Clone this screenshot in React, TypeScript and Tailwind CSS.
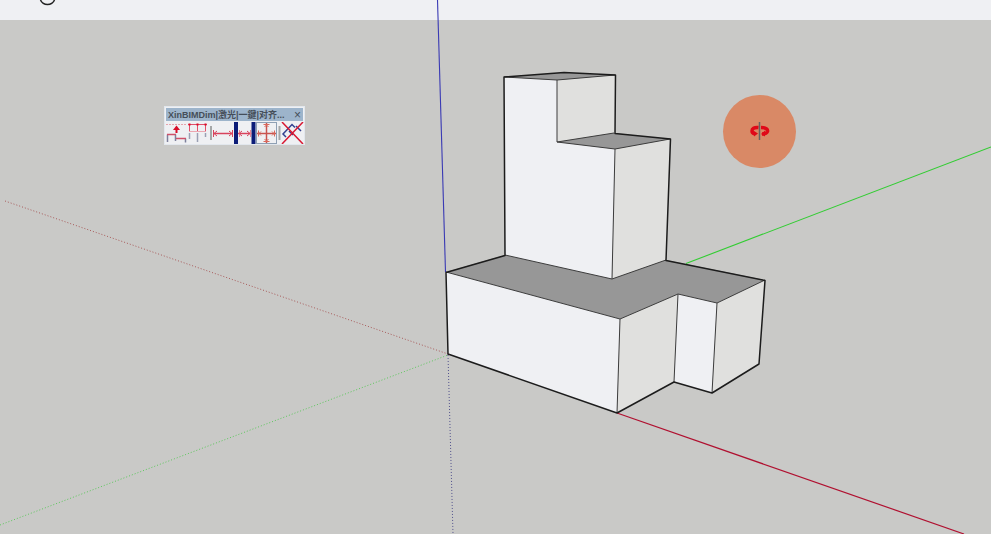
// src/App.tsx
import { useState } from 'react';

const FONT = "font-['Liberation_Sans','Noto_Sans_CJK_SC',sans-serif]";

const edge = { stroke: '#1c1c1c', strokeWidth: 1.5, fill: 'none', strokeLinejoin: 'round' as const };
const thin = { stroke: '#3c3c3c', strokeWidth: 1, fill: 'none' };

const tools = [
  {
    id: 'laser',
    label: 'Laser dimension',
    width: 'w-[22px]',
    icon: (
      <svg viewBox="0 0 22 22" className="w-full h-full" fill="none">
        <path d="M1 2.5H21" stroke="#e6a3ac" strokeWidth="1" strokeDasharray="2 1" />
        <path d="M2.5 20V12.500M10.500 12.500V19M20.500 16.500V20.500" stroke="#7d7f9c" strokeWidth="1.5" />
        <path d="M2 12.5H11M11 16.5H21" stroke="#cf5069" strokeWidth="1.5" />
        <path d="M11.5 11V6" stroke="#d80c28" strokeWidth="2" />
        <path d="M11.5 3.500L15 8H8Z" fill="#d80c28" />
      </svg>
    ),
  },
  {
    id: 'chain',
    label: 'One key dimension',
    width: 'w-[22px]',
    icon: (
      <svg viewBox="0 0 22 22" className="w-full h-full" fill="none">
        <path d="M1 2.5H20" stroke="#e2506a" strokeWidth="1" />
        <path d="M2.500 3V9M10.500 3V9M18.500 3V9" stroke="#e2506a" strokeWidth="1" />
        <path d="M1.500 2.500H3.500M9.500 2.500H11.500M17.500 2.500H19.500" stroke="#d80c28" strokeWidth="2" />
        <path d="M2 9.500H19" stroke="#eba6b0" strokeWidth="1" />
        <path d="M2.500 11V17M10.500 11V20M18.500 11V15" stroke="#9aa0b4" strokeWidth="1.5" />
      </svg>
    ),
  },
  {
    id: 'span',
    label: 'Span',
    width: 'w-[24px]',
    icon: (
      <svg viewBox="0 0 24 22" className="w-full h-full" fill="none">
        <path d="M2 4V18" stroke="#a5a7a8" strokeWidth="2" />
        <path d="M5 11.5H24" stroke="#d8435c" strokeWidth="1.500" />
        <path d="M4.500 8V15M23.500 8V15" stroke="#d8435c" strokeWidth="1" />
        <path d="M8 9L5 11.500L8 14M20 9L23 11.500L20 14" stroke="#d8435c" />
      </svg>
    ),
  },
  {
    id: 'between',
    label: 'Between walls',
    width: 'w-[23px]',
    icon: (
      <svg viewBox="0 0 23 22" className="w-full h-full" fill="none">
        <path d="M3 0V22M20.500 0V22" stroke="#0c1c78" strokeWidth="4" />
        <path d="M5 11.500H18.500" stroke="#d8435c" strokeWidth="1.500" />
        <path d="M6.500 8V15M17.500 8V15" stroke="#e58a99" />
        <path d="M9 9L6 11.500L9 14M14 9L17 11.500L14 14" stroke="#d8435c" />
      </svg>
    ),
  },
  {
    id: 'align',
    label: 'Align',
    width: 'w-[22px]',
    icon: (
      <svg viewBox="0 0 22 22" className="w-full h-full" fill="none">
        <rect x="0.500" y="0.500" width="20" height="21" stroke="#8fa0b4" />
        <path d="M1 11.500H20M10.500 1V21" stroke="#c9534f" strokeWidth="1.500" />
        <path d="M7.500 2.500H13.500M7.500 19.500H13.500M2.500 8.500V14.500M18.500 8.500V14.500" stroke="#d9675a" />
        <path d="M8.500 5L10.500 3L12.500 5M8.500 17L10.500 19L12.500 17M5 9.500L3 11.500L5 13.500M16 9.500L18 11.500L16 13.500" stroke="#d9675a" />
      </svg>
    ),
  },
  {
    id: 'clear',
    label: 'Clear dimensions',
    width: 'w-[26px]',
    icon: (
      <svg viewBox="0 0 26 22" className="w-full h-full" fill="none">
        <path d="M1.500 4V18" stroke="#a5a7a8" strokeWidth="2" />
        <path d="M8 15L5 12L14 2.500L17 5.500M11 9L15 13M18 4L23 9" stroke="#33418f" strokeWidth="1.500" />
        <path d="M4 0L25 22M25 0L4 22" stroke="#d81832" strokeWidth="1.500" />
      </svg>
    ),
  },
];

function Model() {
  return (
    <svg viewBox="0 20 991 514" preserveAspectRatio="xMidYMid slice" className="block w-full h-full overflow-visible" role="img" aria-label="3D model">
      {/* axes behind the model */}
      <path d="M437.500 0L445.500 272" stroke="#3a3ab4" strokeWidth="1.100" />
      <path d="M686 263.500L991 147" stroke="#32cd32" strokeWidth="1.100" />
      <path d="M617 413L964 534" stroke="#b01030" strokeWidth="1.200" />
      <path d="M5 201L448 354" stroke="#a85a5a" strokeWidth="1" strokeDasharray="1 2" />
      <path d="M0 525L448 355" stroke="#5cc85c" strokeWidth="1" strokeDasharray="1 2" />
      <path d="M448 355L453 534" stroke="#50508c" strokeWidth="1" strokeDasharray="1 2" />

      {/* base */}
      <path d="M446 272L505 255L666 260L765 280L717 303L678 294L620 319Z" fill="#979797" />
      <path d="M446 272L620 319L617 413L448 354Z" fill="#eff0f3" />
      <path d="M620 319L678 294L674 382L617 413Z" fill="#e0e0de" />
      <path d="M678 294L717 303L712 393L674 382Z" fill="#eff0f3" />
      <path d="M717 303L765 280L759 364L712 393Z" fill="#e0e0de" />

      {/* tower */}
      <path d="M504 77L557 80V142L615 149L612 279L505 255Z" fill="#eff0f3" />
      <path d="M557 80L615 75V134L557 142Z" fill="#e0e0de" />
      <path d="M615 149L670 139L666 260L612 279Z" fill="#e0e0de" />
      <path d="M504 77L564 72.500L615 75L557 80Z" fill="#979797" />
      <path d="M557 142L614 133L670 139L615 149Z" fill="#979797" />

      <path d="M446 272L620 319L678 294L717 303L765 280" {...thin} />
      <path d="M620 319L617 413M678 294L674 382M717 303L712 393" {...thin} />
      <path d="M505 255L612 279L666 260M615 149L612 279" {...thin} />
      <path d="M504 77L557 80L615 75M557 80V142L615 149L670 139M557 142L614 133" {...thin} />
      <path d="M446 272.500L505 255.500L504 77L564 72.500L615.500 75L615 133.500L670.500 139L666 260.500L765 280.500L759 364L712 393L674 382L617 413L448 354Z" {...edge} />

      {/* orbit cursor with click halo */}
      <circle cx="759.500" cy="131.500" r="36.500" fill="#d98966" />
      <path d="M758.500 127.500C754 127 752 129 752 131C752 132.500 753 133.500 755 134" stroke="#e00818" strokeWidth="3.500" fill="none" />
      <path d="M761 127.500C766 127.500 768 129.500 767.500 131.500C767 133 765 134 762 134" stroke="#e00818" strokeWidth="3.500" fill="none" />
      <path d="M754 131L758 133.500L754 136.500ZM765 130.500L761 134L765 136.500Z" fill="#e00818" />
      <path d="M759.500 122V140" stroke="#646464" strokeWidth="1.500" />
    </svg>
  );
}

export default function App() {
  const [open, setOpen] = useState(true);
  const [active, setActive] = useState('');

  return (
    <div className={`relative flex flex-col h-screen overflow-hidden bg-[#c9c9c7] ${FONT}`}>
      <header className="h-5 shrink-0 bg-[#eff0f3]">
        <svg viewBox="0 0 20 8" className="ml-[38px] h-2 w-5" fill="none">
          <path d="M2.500 0Q4.500 4.500 9.500 4.500Q14.500 4.500 16.500 0" stroke="#222" strokeWidth="1.500" />
        </svg>
      </header>

      <main className="flex-1 min-h-0">
        <Model />
      </main>

      {open && (
        <section className="absolute left-[164px] top-[106px] w-[141px] border border-[#e2e7ed] bg-[#eff0f3]">
          <div className="m-px mb-0 flex h-[13px] items-center justify-between bg-[#9db4cb] px-[2px] text-[#454e59]">
            <h1 className="whitespace-nowrap text-[9px] leading-3 font-bold">XinBIMDim|激光|一鍵|对齐...</h1>
            <button aria-label="Close" onClick={() => setOpen(false)} className="text-[12px] leading-3">×</button>
          </div>
          <div className="flex h-[23px] items-center">
            {tools.map((tool) => (
              <button
                key={tool.id}
                aria-label={tool.label}
                aria-pressed={active === tool.id}
                onClick={() => setActive(tool.id)}
                className={`h-[22px] shrink-0 ${tool.width}`}
              >
                {tool.icon}
              </button>
            ))}
          </div>
        </section>
      )}
    </div>
  );
}
